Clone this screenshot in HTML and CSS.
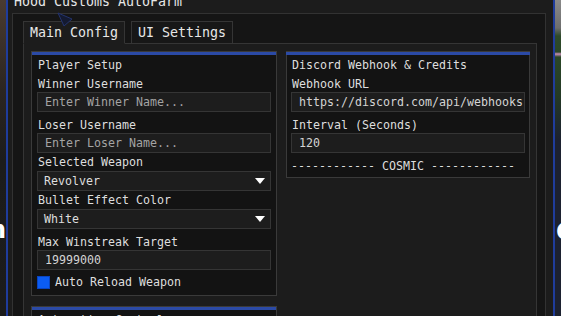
FILE: index.html
```html
<!DOCTYPE html>
<html>
<head>
    <title>Hood Customs AutoFarm</title>
    <link rel="stylesheet" href="styles.css">
</head>
<body>
    <div class="scene">
        <div class="backdrop backdrop-left"><span class="world-text">n</span></div>

        <div class="window">
            <div class="titlebar">Hood Customs AutoFarm</div>

            <div class="content">
                <div class="tabs">
                    <div class="tab active">Main Config</div>
                    <div class="tab">UI Settings</div>
                </div>

                <div class="panel">
                    <div class="column">
                        <div class="group">
                            <div class="group-bar"></div>
                            <div class="group-title">Player Setup</div>

                            <div class="field first">
                                <div class="label">Winner Username</div>
                                <div class="control"><span class="placeholder">Enter Winner Name...</span></div>
                            </div>

                            <div class="field">
                                <div class="label">Loser Username</div>
                                <div class="control"><span class="placeholder">Enter Loser Name...</span></div>
                            </div>

                            <div class="field tight">
                                <div class="label">Selected Weapon</div>
                                <div class="control combo">
                                    <span>Revolver</span>
                                    <svg class="arrow" width="10" height="6" viewBox="0 0 10 6"><path d="M0 0 H10 L5 6 Z" fill="#ffffff"/></svg>
                                </div>
                            </div>

                            <div class="field tight">
                                <div class="label">Bullet Effect Color</div>
                                <div class="control combo">
                                    <span>White</span>
                                    <svg class="arrow" width="10" height="6" viewBox="0 0 10 6"><path d="M0 0 H10 L5 6 Z" fill="#ffffff"/></svg>
                                </div>
                            </div>

                            <div class="field">
                                <div class="label">Max Winstreak Target</div>
                                <div class="control"><span class="value">19999000</span></div>
                            </div>

                            <div class="check-row">
                                <div class="checkbox"></div>
                                <span>Auto Reload Weapon</span>
                            </div>
                        </div>

                        <div class="group">
                            <div class="group-bar"></div>
                            <div class="group-title">Automation Control</div>
                        </div>
                    </div>

                    <div class="column">
                        <div class="group group-side">
                            <div class="group-bar"></div>
                            <div class="group-title">Discord Webhook &amp; Credits</div>

                            <div class="field first">
                                <div class="label">Webhook URL</div>
                                <div class="control"><span class="value">https://discord.com/api/webhooks</span></div>
                            </div>

                            <div class="field">
                                <div class="label">Interval (Seconds)</div>
                                <div class="control"><span class="value">120</span></div>
                            </div>

                            <div class="credits">------------ COSMIC ------------</div>
                        </div>
                    </div>
                </div>
            </div>

            <!-- mouse cursor left over the window -->
            <svg class="cursor" width="16" height="16" viewBox="0 0 16 16">
                <path d="M1 1 L15 7 L7 14 Z" fill="#141a30" stroke="#23336e" stroke-width="1"/>
            </svg>
        </div>

        <div class="backdrop backdrop-right"><span class="world-text">C</span></div>
    </div>
</body>
</html>
```

FILE: styles.css
```css
body {
    margin: 0;
    background-color: #1a1a1a;
    font-family: "DejaVu Sans Mono", "Liberation Mono", monospace;
    color: #dedede;
}

.scene {
    display: flex;
    height: 316px;
    overflow: hidden;
}

.backdrop {
    display: flex;
    flex-direction: column;
    overflow: hidden;
}

.backdrop-left {
    width: 6px;
    background: linear-gradient(#4a3b31 0px, #2b2521 90px, #1c1c1c 160px, #1b1b1b 316px);
}

.backdrop-right {
    flex: 1;
    background: linear-gradient(#8a8a8a 0px, #6e6e6e 28px, #2e4a2a 36px, #2b4727 52px, #c890b8 54px, #2b4727 57px, #243a25 95px, #1c2130 140px, #1c2130 316px);
}

.world-text {
    font-family: "DejaVu Sans", sans-serif;
    font-weight: bold;
    font-size: 24px;
    line-height: 24px;
    color: #ffffff;
}

.backdrop-left .world-text {
    margin-top: 218px;
    margin-left: -11px;
}

.backdrop-right .world-text {
    margin-top: 220px;
    margin-left: 1px;
}

.window {
    position: relative;
    box-sizing: border-box;
    width: 549px;
    height: 340px;
    margin-top: -8px;
    border: 2px solid #1f3c9c;
    background-color: #1c1c1c;
}

.titlebar {
    height: 19px;
    padding-left: 6px;
    font-size: 13.3px;
    line-height: 16px;
    color: #e8e8e8;
}

.content {
    height: 330px;
    margin: 0 7px 0 4px;
    padding: 7px 8px 0 10px;
    border: 1px solid #323232;
    background-color: #151515;
}

.tabs {
    display: flex;
    gap: 6px;
    margin-bottom: -1px;
}

.tab {
    position: relative;
    box-sizing: border-box;
    height: 23px;
    padding: 0 6px;
    border: 1px solid #353535;
    background-color: #171717;
    font-size: 13.3px;
    line-height: 21px;
    color: #e8e8e8;
}

.tab.active {
    background-color: #1c1c1c;
    border-bottom-color: #1c1c1c;
}

.panel {
    display: grid;
    grid-template-columns: 246px 244px;
    gap: 9px;
    height: 300px;
    padding: 7px 5px 0 7px;
    border: 1px solid #353535;
    background-color: #1c1c1c;
    font-size: 11.63px;
}

.column {
    display: flex;
    flex-direction: column;
    gap: 10px;
}

.group {
    padding: 0 5px 5px 5px;
    border: 1px solid #3a3a3a;
    background-color: #131313;
}

.group-side {
    padding: 0 4px 3px 4px;
}

.group-bar {
    height: 3px;
    margin: 0 -5px;
    background-color: #2b4aa6;
}

.group-title {
    margin-top: 2px;
    padding-left: 1px;
    line-height: 16px;
}

.field {
    margin-top: 5px;
}

.field.first {
    margin-top: 3px;
}

.field.tight {
    margin-top: 1px;
}

.label {
    padding-left: 1px;
    line-height: 16px;
}

.control {
    box-sizing: border-box;
    height: 20px;
    padding: 0 7px;
    border: 1px solid #353535;
    background-color: #1d1d1d;
    line-height: 18px;
    white-space: nowrap;
    overflow: hidden;
}

.field.tight .control {
    margin-top: 1px;
}

.control.combo {
    display: flex;
    justify-content: space-between;
    align-items: center;
    padding: 0 5px 0 6px;
}

.placeholder {
    color: #a4a4a4;
}

.value {
    color: #d4d4d4;
}

.check-row {
    display: flex;
    align-items: center;
    gap: 5px;
    height: 16px;
    margin-top: 4px;
}

.checkbox {
    box-sizing: border-box;
    width: 13px;
    height: 13px;
    border: 1px solid #0a45c0;
    background-color: #0b5cf2;
}

.credits {
    margin-top: 5px;
    line-height: 16px;
}

.cursor {
    position: absolute;
    left: 49px;
    top: 18px;
}
```
